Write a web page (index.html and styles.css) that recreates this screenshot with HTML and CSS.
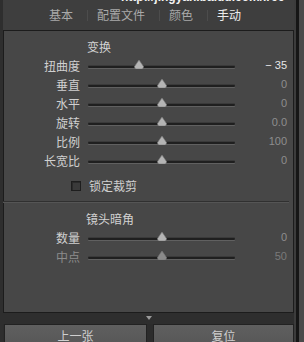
FILE: index.html
```html
<!DOCTYPE html>
<html lang="zh">
<head>
<meta charset="utf-8">
<link rel="stylesheet" href="styles.css">
</head>
<body>
<div class="app">
  <div class="edge-l"></div>
  <div class="main">
    <div class="topbar">
      <span class="watermark">http://jingyan.baidu.com/lrcc</span>
      <span class="tab">基本</span><span class="sep"></span>
      <span class="tab">配置文件</span><span class="sep"></span>
      <span class="tab">颜色</span><span class="sep"></span>
      <span class="tab active">手动</span>
    </div>
    <div class="panel">
      <div class="heading">变换</div>
      <div class="row"><span class="label">扭曲度</span><span class="slider"><span class="track"></span><svg class="thumb" style="left:46px" viewBox="0 0 10 9" width="10" height="9"><path d="M5 0 L9.5 6.5 Q9.5 9 7.5 9 L2.5 9 Q0.5 9 0.5 6.5 Z"/></svg></span><span class="value hi">− 35</span></div>
      <div class="row"><span class="label">垂直</span><span class="slider"><span class="track"></span><svg class="thumb" style="left:69px" viewBox="0 0 10 9" width="10" height="9"><path d="M5 0 L9.5 6.5 Q9.5 9 7.5 9 L2.5 9 Q0.5 9 0.5 6.5 Z"/></svg></span><span class="value">0</span></div>
      <div class="row"><span class="label">水平</span><span class="slider"><span class="track"></span><svg class="thumb" style="left:69px" viewBox="0 0 10 9" width="10" height="9"><path d="M5 0 L9.5 6.5 Q9.5 9 7.5 9 L2.5 9 Q0.5 9 0.5 6.5 Z"/></svg></span><span class="value">0</span></div>
      <div class="row"><span class="label">旋转</span><span class="slider"><span class="track"></span><svg class="thumb" style="left:69px" viewBox="0 0 10 9" width="10" height="9"><path d="M5 0 L9.5 6.5 Q9.5 9 7.5 9 L2.5 9 Q0.5 9 0.5 6.5 Z"/></svg></span><span class="value">0.0</span></div>
      <div class="row"><span class="label">比例</span><span class="slider"><span class="track"></span><svg class="thumb" style="left:69px" viewBox="0 0 10 9" width="10" height="9"><path d="M5 0 L9.5 6.5 Q9.5 9 7.5 9 L2.5 9 Q0.5 9 0.5 6.5 Z"/></svg></span><span class="value">100</span></div>
      <div class="row"><span class="label">长宽比</span><span class="slider"><span class="track"></span><svg class="thumb" style="left:69px" viewBox="0 0 10 9" width="10" height="9"><path d="M5 0 L9.5 6.5 Q9.5 9 7.5 9 L2.5 9 Q0.5 9 0.5 6.5 Z"/></svg></span><span class="value">0</span></div>
      <div class="check-row"><span class="checkbox"></span><span class="check-label">锁定裁剪</span></div>
      <div class="divider"></div>
      <div class="heading heading-2">镜头暗角</div>
      <div class="row"><span class="label">数量</span><span class="slider"><span class="track"></span><svg class="thumb" style="left:69px" viewBox="0 0 10 9" width="10" height="9"><path d="M5 0 L9.5 6.5 Q9.5 9 7.5 9 L2.5 9 Q0.5 9 0.5 6.5 Z"/></svg></span><span class="value">0</span></div>
      <div class="row dim"><span class="label">中点</span><span class="slider"><span class="track"></span><svg class="thumb" style="left:69px" viewBox="0 0 10 9" width="10" height="9"><path d="M5 0 L9.5 6.5 Q9.5 9 7.5 9 L2.5 9 Q0.5 9 0.5 6.5 Z"/></svg></span><span class="value">50</span></div>
    </div>
    <div class="strip"><span class="arrow"></span></div>
    <div class="buttons">
      <div class="btn btn-prev">上一张</div>
      <div class="btn btn-reset">复位</div>
    </div>
  </div>
  <div class="edge-r"><span class="edge-dark"></span><span class="edge-bar"></span></div>
</div>
</body>
</html>
```
FILE: styles.css
```css
html, body {
  margin: 0;
  padding: 0;
}
body {
  width: 304px;
  height: 342px;
  overflow: hidden;
  background: #2c2c2c;
  font-family: "Noto Sans CJK SC", "Noto Sans", sans-serif;
  font-size: 12px;
  color: #cfcfcf;
}
.app {
  display: flex;
  height: 342px;
}
.edge-l {
  width: 3px;
  background: #2e2e2e;
}
.main {
  width: 291px;
  display: flex;
  flex-direction: column;
}
.edge-r {
  width: 10px;
  display: flex;
  background: #3c3c3c;
}
.edge-dark {
  width: 3px;
  margin-left: 2px;
  background: #161616;
}
.edge-bar {
  width: 5px;
  background: #4a4a4a;
}

/* top tabs */
.topbar {
  position: relative;
  height: 30px;
  flex: none;
  display: flex;
  align-items: center;
  padding-left: 46px;
  background: #3e3e3e;
  color: #a9a9a9;
  line-height: 16px;
}
.watermark {
  position: absolute;
  top: -11px;
  left: 118px;
  font-family: "Liberation Sans", sans-serif;
  font-weight: bold;
  font-size: 12px;
  color: #f2f2f2;
  white-space: nowrap;
}
.tab {
  font-size: 12px;
}
.tab.active {
  color: #ececec;
}
.sep {
  width: 1px;
  height: 11px;
  margin: 0 9px 0 14px;
  background: #4c4c4c;
}

/* panel */
.panel {
  height: 283px;
  flex: none;
  box-sizing: border-box;
  border: 1px solid #1c1c1c;
  background: #474747;
  padding-top: 6px;
}
.heading {
  height: 19px;
  line-height: 19px;
  padding-left: 83px;
  color: #d2d2d2;
}
.heading-2 {
  padding-left: 82px;
}
.row {
  display: grid;
  grid-template-columns: 76px 147px 44px;
  column-gap: 8px;
  height: 19px;
  align-items: center;
  line-height: 19px;
}
.label {
  text-align: right;
  color: #d0d0d0;
}
.value {
  text-align: right;
  color: #8e8e8e;
  font-family: "Liberation Sans", sans-serif;
  font-size: 11px;
}
.value.hi {
  color: #e6e6e6;
}
.dim .label {
  color: #8c8c8c;
}
.dim .value {
  color: #7a7a7a;
}
.slider {
  position: relative;
  height: 19px;
}
.track {
  position: absolute;
  left: 0;
  right: 0;
  top: 10px;
  height: 2px;
  border-radius: 2px;
  background: #1f1f1f;
  box-shadow: 0 1px 0 #606060, 0 -1px 0 #3a3a3a;
}
.thumb {
  position: absolute;
  top: 4px;
  fill: #b4b4b4;
  stroke: #7a7a7a;
  stroke-width: 0.6;
}
.dim .thumb {
  fill: #8a8a8a;
}

.check-row {
  display: flex;
  align-items: center;
  height: 19px;
  margin-top: 6px;
  padding-left: 67px;
}
.checkbox {
  width: 8px;
  height: 8px;
  border: 1px solid #1e1e1e;
  background: #3a3a3a;
  box-shadow: inset 1px 1px 0 #2a2a2a;
  margin-right: 8px;
}
.check-label {
  color: #d0d0d0;
}
.divider {
  margin: 6px 4px 0 -1px;
  height: 1px;
  border-top: 1px solid #303030;
  background: #555555;
  margin-bottom: 6px;
}

.strip {
  height: 11px;
  flex: none;
  background: #2e2e2e;
  position: relative;
}
.arrow {
  position: absolute;
  left: 143px;
  top: 3px;
  width: 0;
  height: 0;
  border-left: 3px solid transparent;
  border-right: 3px solid transparent;
  border-top: 4px solid #9a9a9a;
}
.buttons {
  display: flex;
  gap: 6px;
  padding-left: 1px;
}
.btn {
  height: 30px;
  box-sizing: border-box;
  border: 1px solid #222;
  background: linear-gradient(#5f5f5f, #545454);
  color: #cfcfcf;
  text-align: center;
  line-height: 22px;
  font-size: 12px;
}
.btn-prev {
  width: 143px;
}
.btn-reset {
  width: 141px;
}
```
